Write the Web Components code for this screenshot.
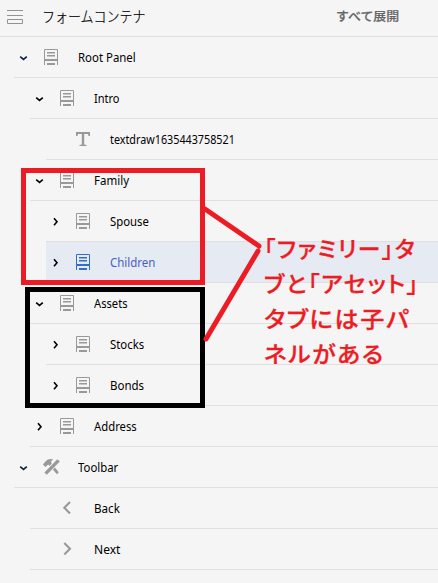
<!DOCTYPE html>
<html lang="ja">
<head>
<meta charset="utf-8">
<title>フォームコンテナ</title>
<style>
html,body{margin:0;background:#f5f5f5;overflow:hidden}
body{font-family:"Noto Sans","Noto Sans CJK JP",sans-serif;color:#000}
</style>
</head>
<body>
<form-tree></form-tree>
<script>
// Text scaled horizontally to an exact ink width
class FitText extends HTMLElement {
  connectedCallback() {
    const root = this.attachShadow({mode: 'open'});
    root.innerHTML = `<style>:host{display:block;white-space:nowrap;width:${this.getAttribute('w')}px}
      span{display:inline-block;transform-origin:0 50%}</style><span><slot></slot></span>`;
    const span = root.querySelector('span');
    span.style.transform = `scaleX(${this.getAttribute('w') / span.offsetWidth})`;
  }
}
customElements.define('fit-text', FitText);

const ICONS = {
  panel: '<path d="M.5 16V.5h13V16" fill="none" stroke="currentColor"/><path d="M3 3h8v1.6H3zM3 5.9h8v1.6H3zM1 10h12v2H1zM3 14h8v2H3z" fill="currentColor"/>',
  text: '<path d="M0 1h14v4h-1.5L12 3H8.2v10.5L10.5 14v1h-7v-1l2.3-.5V3H2l-.5 2H0z" fill="currentColor"/>',
  tools: '<path d="M-1 5.6 1.6 2.2Q4.6-.8 9.3.4L7.2 2 7.4 4.2 14.8 13.3 13 15.2 4.3 5.6 1.3 8z" fill="currentColor"/><path d="M15.3.6.6 15.6" fill="none" stroke="#f5f5f5" stroke-width="5"/><path d="M14.6 1.4 1.6 14.6" fill="none" stroke="currentColor" stroke-width="3.4"/>',
  back: '<path d="M10 2 4.3 7.7 10 13.4" fill="none" stroke="currentColor" stroke-width="2.1"/>',
  next: '<path d="M4.3 2 10 7.7 4.3 13.4" fill="none" stroke="currentColor" stroke-width="2.1"/>'
};

class TreeIcon extends HTMLElement {
  connectedCallback() {
    this.attachShadow({mode: 'open'}).innerHTML = `<style>:host{display:block;width:14px;height:16px;color:var(--icon,#999)}
      svg{display:block;overflow:visible}</style><svg width="14" height="16">${ICONS[this.getAttribute('name')]}</svg>`;
  }
}
customElements.define('tree-icon', TreeIcon);

class TreeRow extends HTMLElement {
  connectedCallback() {
    const a = n => this.getAttribute(n);
    const d = a('state') === 'open' ? 'M1.2 3.6 4.5 6.4 7.8 3.6' : a('state') === 'closed' ? 'M3 1.3 6 4.8 3 8.3' : '';
    this.attachShadow({mode: 'open'}).innerHTML = `<style>
      :host{display:flex;box-sizing:border-box;height:41px;margin-left:${14 + 16 * a('level')}px;padding-left:5px;border-bottom:1px solid #dfdfdf;align-items:center}
      :host([selected]){background:#e6eaf2;color:#4462c4;--icon:#326ec8}
      .chev{width:9px;height:9px;margin-right:16px;color:${a('state') === 'open' && a('level') !== '1' ? '#06233d' : '#000'}}
      tree-icon{margin-right:20px}
      fit-text{font-size:12.5px;line-height:20px;padding-top:1px}
    </style><svg class="chev"><path d="${d}" fill="none" stroke="currentColor" stroke-width="1.6"/></svg>
    <tree-icon name="${a('icon')}"></tree-icon><fit-text w="${a('w')}">${a('label')}</fit-text>`;
  }
}
customElements.define('tree-row', TreeRow);

class TreeHeader extends HTMLElement {
  connectedCallback() {
    this.attachShadow({mode: 'open'}).innerHTML = `<style>
      :host{display:flex;box-sizing:border-box;height:37px;border-bottom:1px solid #dfdfdf;padding:0 39px 4px 7px;align-items:center}
      svg{width:16px;height:14px;margin:1px 19px 0 0}
      .title{font-size:14.5px;line-height:22px;font-weight:300;font-family:"Noto Sans CJK JP",sans-serif;-webkit-text-stroke:.2px #000}
      .all{margin-left:auto;font-size:12.5px;line-height:20px;font-weight:500;font-family:"Noto Sans CJK JP",sans-serif;color:#666;-webkit-text-stroke:.2px #666}
    </style><svg><path d="M0 .5h16M0 5.5h16M.5 9.5h15v4H.5z" fill="none" stroke="#929292"/></svg>
    <fit-text class="title" w="104">フォームコンテナ</fit-text><fit-text class="all" w="63">すべて展開</fit-text>`;
  }
}
customElements.define('tree-header', TreeHeader);

// Callout frames, connectors and note lying over the tree
class TreeNote extends HTMLElement {
  connectedCallback() {
    this.attachShadow({mode: 'open'}).innerHTML = `<style>
      :host{position:absolute;left:0;top:0;width:438px;height:583px;color:#ed1c24}
      svg{position:absolute;left:0;top:0}
      .note{position:absolute;left:264px;top:230px;font:500 22px/35px "Noto Sans CJK JP",sans-serif;letter-spacing:1.5px;-webkit-text-stroke:.3px #ed1c24;font-feature-settings:"palt"}
    </style><svg width="438" height="583" fill="none" stroke="#ed1c24" stroke-width="5">
      <path d="M23.5 170.5h179v112h-179z"/>
      <path d="M27.5 289.5h175v116h-175z" stroke="#000"/>
      <path d="M205 209 259 246M258 251 206 339" stroke-linecap="round"/>
    </svg><div class="note"><fit-text w="152">「ファミリー」タ</fit-text><fit-text w="156">ブと「アセット」</fit-text><fit-text w="146">タブには子パ</fit-text><fit-text w="121">ネルがある</fit-text></div>`;
  }
}
customElements.define('tree-note', TreeNote);

const ROWS = [
  [0, 'open', 'panel', 'Root Panel', 57.5], [1, 'open', 'panel', 'Intro', 25.5],
  [2, '', 'text', 'textdraw1635443758521', 125], [1, 'open', 'panel', 'Family', 35],
  [2, 'closed', 'panel', 'Spouse', 39], [2, 'closed', 'panel', 'Children', 45, 'selected'],
  [1, 'open', 'panel', 'Assets', 34], [2, 'closed', 'panel', 'Stocks', 34.5],
  [2, 'closed', 'panel', 'Bonds', 34], [1, 'closed', 'panel', 'Address', 42.5],
  [0, 'open', 'tools', 'Toolbar', 40], [1, '', 'back', 'Back', 26], [1, '', 'next', 'Next', 26]
];
class FormTree extends HTMLElement {
  connectedCallback() {
    this.attachShadow({mode: 'open'}).innerHTML = `<style>:host{display:block;position:relative;height:583px;background:#f5f5f5;overflow:hidden}</style>
    <tree-header></tree-header>${ROWS.map(([l, s, i, t, w, x = '']) =>
      `<tree-row level="${l}" state="${s}" icon="${i}" label="${t}" w="${w}" ${x}></tree-row>`).join('')}<tree-note></tree-note>`;
  }
}
customElements.define('form-tree', FormTree);
</script>
</body>
</html>
